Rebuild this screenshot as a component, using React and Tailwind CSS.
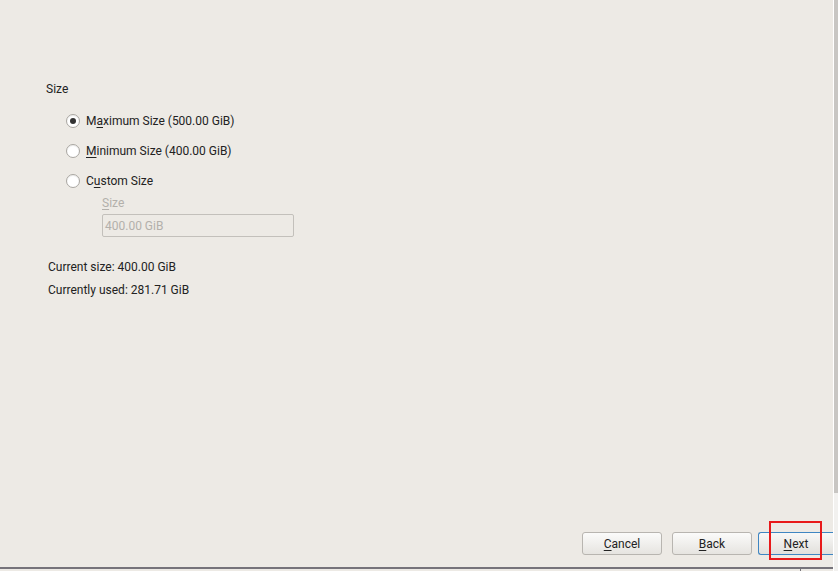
import React from 'react'

const Radio = ({ checked, children }) => (
    <label className="flex items-center gap-[6px] h-[30px]">
        <span className="w-[14px] h-[14px] rounded-full border border-[#a9a6a1] bg-white flex items-center justify-center shadow-[inset_0_1px_1px_rgba(0,0,0,0.08)]">
            {checked && <span className="w-[6px] h-[6px] rounded-full bg-[#333]" />}
        </span>
        <span>{children}</span>
    </label>
)

const Btn = ({ children, primary }) => (
    <button
        className={
            primary
                ? 'w-[75px] h-[23px] rounded-l-[3px] border border-r-0 border-[#3f86c2] bg-gradient-to-b from-[#f8f8f7] to-[#e2e0dc] text-[#222]'
                : 'w-[80px] h-[23px] rounded-[3px] border border-[#b8b5b0] bg-gradient-to-b from-[#fbfbfa] to-[#e6e4e0] text-[#222]'
        }
    >
        {children}
    </button>
)

export default function App() {
    return (
        <div className="w-[838px] h-[571px] bg-[#edeae5] flex font-['Roboto',sans-serif] text-[12px] text-[#222] overflow-hidden">
            <div className="flex-1 flex flex-col relative">
                <div className="pl-[46px] pt-[82px] flex-1">
                    <div className="leading-[14px]">Size</div>
                    <div className="pl-[20px] pt-[10px]">
                        <Radio checked>
                            M<span className="underline underline-offset-2">a</span>ximum Size (500.00 GiB)
                        </Radio>
                        <Radio>
                            <span className="underline underline-offset-2">M</span>inimum Size (400.00 GiB)
                        </Radio>
                        <Radio>
                            C<span className="underline underline-offset-2">u</span>stom Size
                        </Radio>
                        <div className="pl-[36px]">
                            <div className="text-[#b3b0ab] leading-[14px]">
                                <span className="underline underline-offset-2">S</span>ize
                            </div>
                            <div className="mt-[4px] w-[192px] h-[23px] border border-[#c3c0bb] rounded-[2px] flex items-center px-[2px] text-[#b3b0ab]">
                                400.00 GiB
                            </div>
                        </div>
                    </div>
                    <div className="pl-[2px] pt-[19px] leading-[23px]">
                        <div>Current size: 400.00 GiB</div>
                        <div>Currently used: 281.71 GiB</div>
                    </div>
                </div>
                <div className="flex justify-end items-center gap-[10px] h-[23px] mb-[12px]">
                    <Btn>
                        <span className="underline underline-offset-2">C</span>ancel
                    </Btn>
                    <div className="flex gap-[6px]">
                        <Btn>
                            <span className="underline underline-offset-2">B</span>ack
                        </Btn>
                        <div className="relative">
                            <Btn primary>
                                <span className="underline underline-offset-2">N</span>ext
                            </Btn>
                            <div className="absolute left-[11px] top-[-11px] w-[53px] h-[39px] border-2 border-[#e8191a]" />
                        </div>
                    </div>
                </div>
                <div className="h-[4px] border-t-2 border-[#76737a] relative">
                    <div className="absolute left-[800px] top-0 w-px h-[3px] bg-[#76737a]" />
                </div>
            </div>
            <div className="w-[5px] flex">
                <div className="w-[1px] bg-white" />
                <div className="flex-1 flex flex-col">
                    <div className="h-[493px] bg-[#c8c6c3]" />
                    <div className="flex-1 bg-[#f2f1ef]" />
                </div>
            </div>
        </div>
    )
}
